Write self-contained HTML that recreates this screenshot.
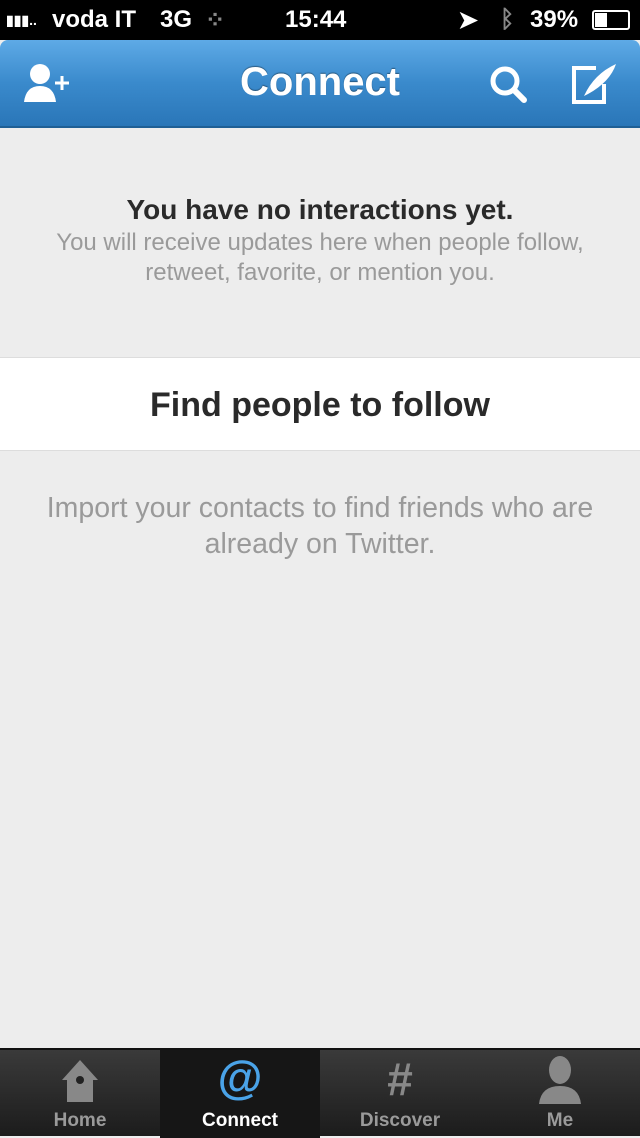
<!DOCTYPE html>
<html><head><meta charset="utf-8"><style>
*{margin:0;padding:0;box-sizing:border-box}
body{width:640px;height:1136px;background:#ededed;font-family:"Liberation Sans",Arial,sans-serif;position:relative;overflow:hidden}
.sb{position:absolute;top:0;left:0;width:640px;height:40px;background:#000;color:#fff;font-size:24px;font-weight:bold}
.sb span{position:absolute;top:6px}
.nav{position:absolute;top:40px;left:0;width:640px;height:88px;background:linear-gradient(#5eaae6,#3a8acc 50%,#2a76b8);border-radius:8px 8px 0 0;border-bottom:2px solid #1f5f95}
.nav h1{position:absolute;width:100%;text-align:center;top:20px;color:#fff;font-size:40px;text-shadow:0 -1px 1px rgba(0,0,0,.4)}
.msg{position:absolute;top:194px;width:100%;text-align:center}
.msg b{display:block;font-size:28px;color:#2a2a2a}
.msg p{font-size:24px;color:#9a9a9a;line-height:30px;margin-top:2px}
.find{position:absolute;top:357px;width:640px;height:94px;background:#fff;border-top:1px solid #ddd;border-bottom:1px solid #ddd;text-align:center;line-height:94px;font-size:34px;font-weight:bold;color:#2a2a2a}
.imp{position:absolute;top:490px;width:100%;text-align:center;font-size:28.5px;color:#9a9a9a;line-height:36px}
.tab{position:absolute;top:1048px;left:0;width:640px;height:88px;background:linear-gradient(#3a3a3a,#1c1c1c);border-top:2px solid #111}
.t{position:absolute;top:0;width:160px;height:88px;text-align:center;color:#9a9a9a;font-size:19px;font-weight:bold}
.t .l{position:absolute;bottom:6px;width:100%}
.t.a{background:#161616;color:#fff}
</style></head><body>
<div class="sb"><span style="left:6px;font-size:14px;top:12px">▮▮▮..</span><span style="left:52px">voda IT</span><span style="left:160px">3G</span><span style="left:205px;color:#888">⁘</span><span style="left:285px">15:44</span><span style="left:458px">➤</span><span style="left:500px;color:#888">ᛒ</span><span style="left:530px">39%</span>
<span style="left:592px;top:10px;width:38px;height:20px;border:2px solid #fff;border-radius:3px"><i style="display:block;width:12px;height:14px;margin:1px;background:#fff"></i></span></div>
<div class="nav">
<svg style="position:absolute;left:22px;top:22px" width="52" height="44"><circle cx="18" cy="12" r="10" fill="#fff"/><path d="M2 40 Q4 24 18 24 Q32 24 34 40Z" fill="#fff"/><path d="M40 14v14M33 21h14" stroke="#fff" stroke-width="3"/></svg>
<h1>Connect</h1>
<svg style="position:absolute;left:488px;top:24px" width="42" height="42"><circle cx="17" cy="17" r="12" stroke="#fff" stroke-width="5" fill="none"/><path d="M26 26l10 10" stroke="#fff" stroke-width="6" stroke-linecap="round"/></svg>
<svg style="position:absolute;left:570px;top:20px" width="50" height="48"><path d="M26 8H4v34h30V24" stroke="#fff" stroke-width="4" fill="none"/><path d="M14 36 Q24 14 46 4 Q40 22 18 34Z" fill="#fff"/></svg>
</div>
<div class="msg"><b>You have no interactions yet.</b><p>You will receive updates here when people follow,<br>retweet, favorite, or mention you.</p></div>
<div class="find">Find people to follow</div>
<div class="imp">Import your contacts to find friends who are<br>already on Twitter.</div>
<div class="tab">
<div class="t" style="left:0"><svg style="position:absolute;left:60px;top:8px" width="40" height="44"><path d="M20 2L2 22h5v22h26V22h5Z" fill="#888"/><circle cx="20" cy="22" r="4" fill="#222"/></svg><div class="l">Home</div></div>
<div class="t a" style="left:160px"><div style="position:absolute;width:100%;top:2px;font-size:46px;line-height:50px;color:#4aa3e8;font-weight:bold">@</div><div class="l">Connect</div></div>
<div class="t" style="left:320px"><div style="position:absolute;width:100%;top:4px;font-size:46px;line-height:50px;color:#888;font-weight:bold">#</div><div class="l">Discover</div></div>
<div class="t" style="left:480px"><svg style="position:absolute;left:57px;top:6px" width="46" height="48"><ellipse cx="23" cy="14" rx="11" ry="14" fill="#888"/><path d="M2 48Q4 30 23 30Q42 30 44 48Z" fill="#888"/></svg><div class="l">Me</div></div>
</div>
</body></html>
